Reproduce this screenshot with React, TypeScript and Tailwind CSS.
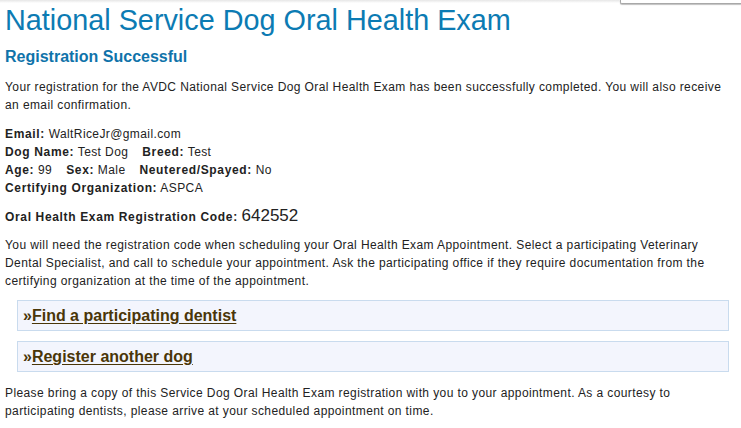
import React from 'react';

const details = [
  [
    { label: 'Email:', value: 'WaltRiceJr@gmail.com' },
  ],
  [
    { label: 'Dog Name:', value: 'Test Dog' },
    { label: 'Breed:', value: 'Test' },
  ],
  [
    { label: 'Age:', value: '99' },
    { label: 'Sex:', value: 'Male' },
    { label: 'Neutered/Spayed:', value: 'No' },
  ],
  [
    { label: 'Certifying Organization:', value: 'ASPCA' },
  ],
];

const links = ['Find a participating dentist', 'Register another dog'];

export default function App() {
  return (
    <div className="relative min-h-[428px] w-[741px] bg-white font-['Liberation_Sans',Arial,sans-serif] text-[12px] leading-[18px] tracking-[0.4px] text-[#222]">
      {/* faint shadow along the top edge */}
      <div className="absolute inset-x-0 top-0 h-[3px] bg-gradient-to-b from-[#e6e6e6] to-white" />
      {/* bottom edge of a panel hanging in from above */}
      <div className="absolute right-0 top-0 h-[4px] w-[121px] rounded-bl-[2px] border-b border-l border-[#a8a8a8] bg-white shadow-[0_1px_1px_rgba(0,0,0,0.25)]" />

      <div className="px-[5px] pt-[4px]">
        <h1 className="text-[28.8px] font-normal leading-[32px] tracking-normal text-[#0c7bb3]">
          National Service Dog Oral Health Exam
        </h1>
        <h2 className="mt-[11px] text-[16px] font-bold leading-[20px] tracking-normal text-[#0f73aa]">
          Registration Successful
        </h2>

        <p className="mt-[11px]">
          Your registration for the AVDC National Service Dog Oral Health Exam has been successfully completed. You will also
          receive an email confirmation.
        </p>

        <div className="mt-[11px]">
          {details.map((row, i) => (
            <div key={i} className="flex gap-[14px]">
              {row.map((item) => (
                <span key={item.label}>
                  <b className="tracking-[0.65px]">{item.label}</b> {item.value}
                </span>
              ))}
            </div>
          ))}
        </div>

        <div className="mt-[8px] leading-[22px]">
          <b className="tracking-[0.65px]">Oral Health Exam Registration Code:</b>{' '}
          <span className="text-[17px] tracking-normal">642552</span>
        </div>

        <p className="mt-[8px]">
          You will need the registration code when scheduling your Oral Health Exam Appointment. Select a participating
          Veterinary Dental Specialist, and call to schedule your appointment. Ask the participating office if they require
          documentation from the certifying organization at the time of the appointment.
        </p>

        <div className="ml-[12px] mr-[7px] mt-[10px] flex flex-col gap-[10px]">
          {links.map((text) => (
            <div
              key={text}
              className="h-[31px] border border-[#c9dbee] bg-[#f3f5fd] pl-[5px] pt-[6px] text-[16px] font-bold leading-[18px] tracking-normal text-[#4a3608]"
            >
              »
              <a href="#" className="text-[#4a3608] underline underline-offset-[2px]">
                {text}
              </a>
            </div>
          ))}
        </div>

        <p className="mt-[12px]">
          Please bring a copy of this Service Dog Oral Health Exam registration with you to your appointment. As a courtesy to
          participating dentists, please arrive at your scheduled appointment on time.
        </p>
      </div>
    </div>
  );
}
